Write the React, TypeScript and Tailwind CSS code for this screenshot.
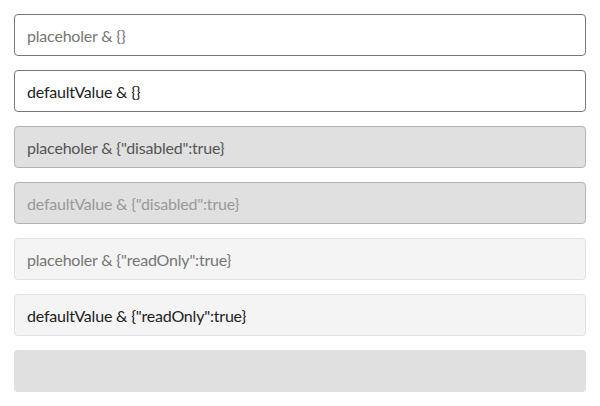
import React from "react";

const base =
  "block w-full h-[42px] rounded-[4px] border px-3 text-[16px] tracking-[-0.2px] outline-none";

export default function App() {
  return (
    <div className="flex flex-col gap-[14px] p-[14px] bg-white font-['Lato',sans-serif]">
      <input
        className={`${base} border-[#767676] bg-white text-[#222] placeholder:text-[#767676]`}
        placeholder="placeholer & {}"
      />
      <input
        className={`${base} border-[#767676] bg-white text-[#222] placeholder:text-[#767676]`}
        defaultValue="defaultValue & {}"
      />
      <input
        className={`${base} border-[#b3b3b3] bg-[#e0e0e0] text-[#9a9a9a] placeholder:text-[#555]`}
        placeholder='placeholer & {"disabled":true}'
        disabled
      />
      <input
        className={`${base} border-[#b3b3b3] bg-[#e0e0e0] text-[#999] placeholder:text-[#555]`}
        defaultValue='defaultValue & {"disabled":true}'
        disabled
      />
      <input
        className={`${base} border-[#e0e0e0] bg-[#f4f4f4] text-[#222] placeholder:text-[#767676]`}
        placeholder='placeholer & {"readOnly":true}'
        readOnly
      />
      <input
        className={`${base} border-[#e0e0e0] bg-[#f4f4f4] text-[#222] placeholder:text-[#767676]`}
        defaultValue='defaultValue & {"readOnly":true}'
        readOnly
      />
      <div className="h-[42px] rounded-[4px] bg-[#e0e0e0]" />
    </div>
  );
}
